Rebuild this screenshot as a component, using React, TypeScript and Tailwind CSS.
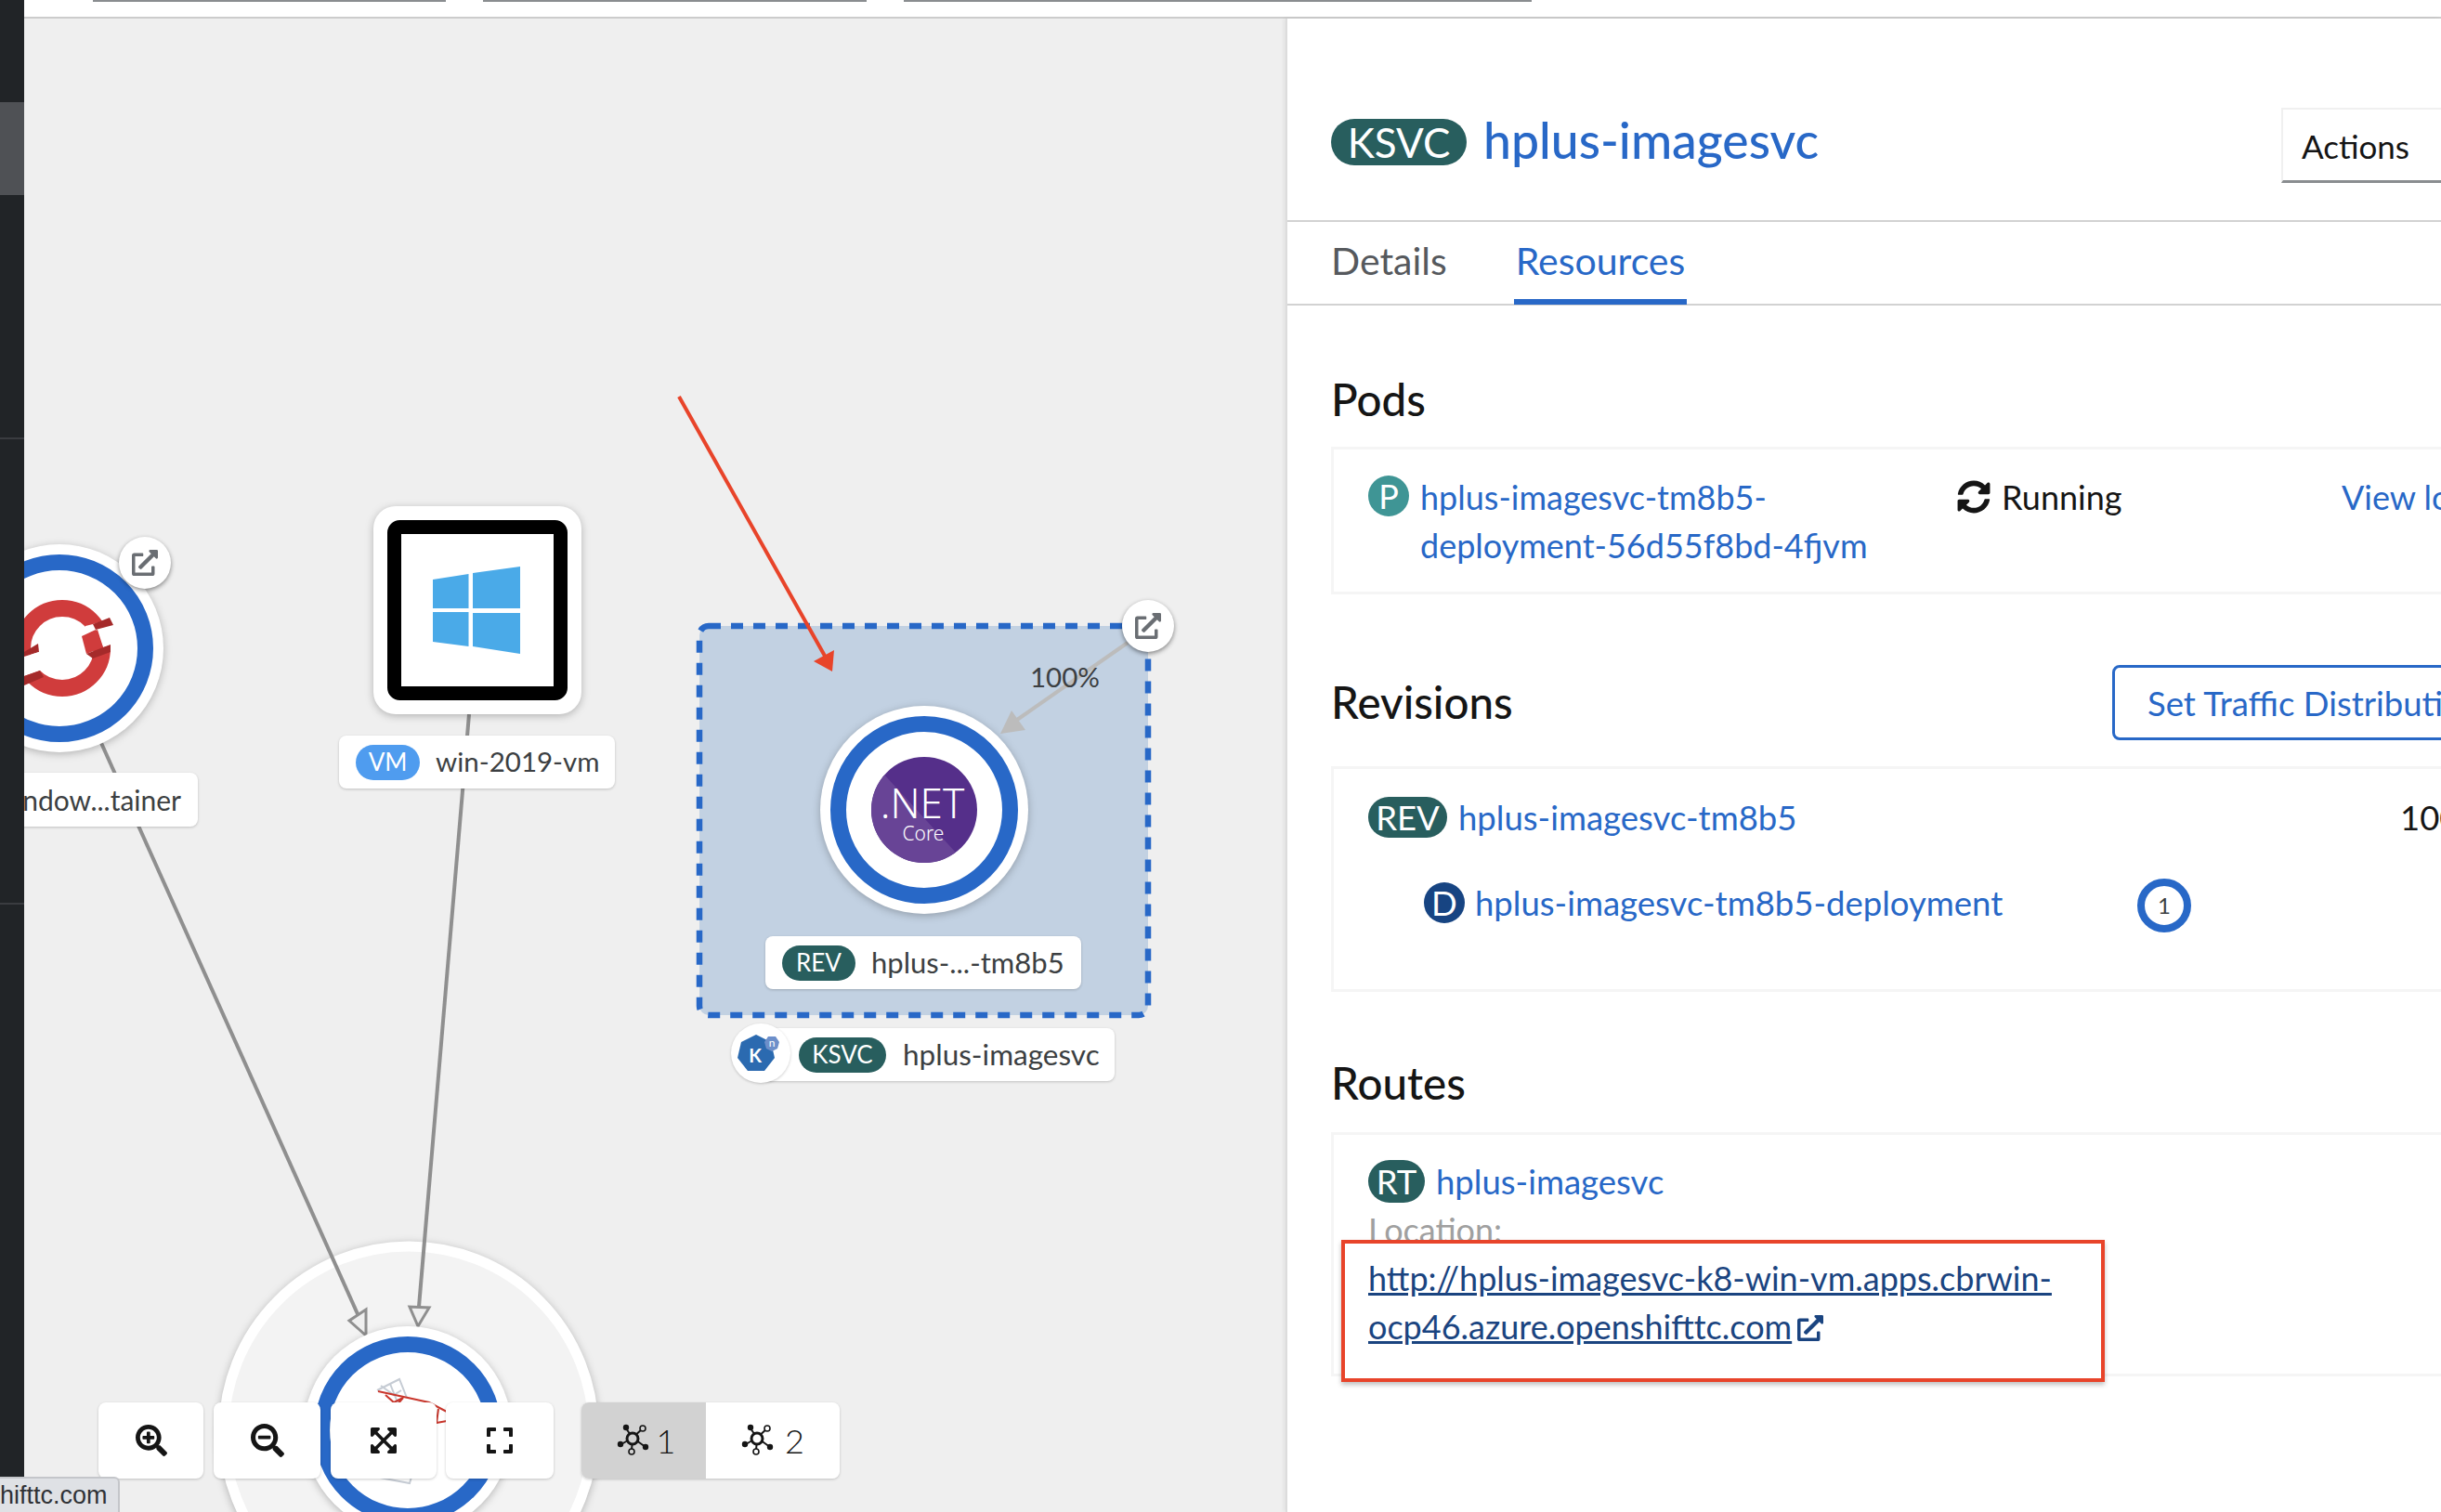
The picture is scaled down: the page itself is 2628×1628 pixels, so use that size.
import React from 'react';
import { FaExpand, FaExpandArrowsAlt, FaExternalLinkAlt, FaSearchMinus, FaSearchPlus, FaSyncAlt } from 'react-icons/fa';

const BLUE = '#2868c7';
const nodeShadow = 'drop-shadow-[0_2px_4px_rgba(0,0,0,0.25)]';

function TopologyIcon({ bg }: { bg: string }) {
  return (
    <svg width="36" height="36" viewBox="0 0 36 36" fill="none" className="text-[#151515]">
      <g stroke="currentColor" strokeWidth="2">
        <line x1="17" y1="15" x2="10" y2="5" />
        <line x1="17" y1="15" x2="5" y2="22" />
        <line x1="17" y1="15" x2="31" y2="25" />
        <line x1="17" y1="15" x2="28" y2="5" />
        <line x1="17" y1="15" x2="16" y2="29" />
      </g>
      <circle cx="17" cy="16" r="6" fill={bg} stroke="currentColor" strokeWidth="3" />
      <circle cx="10" cy="4" r="3.2" fill="currentColor" />
      <circle cx="4" cy="22" r="3.2" fill="currentColor" />
      <circle cx="31" cy="25" r="3.2" fill="currentColor" />
      <circle cx="28" cy="5" r="3" fill={bg} stroke="currentColor" strokeWidth="1.6" />
      <circle cx="16" cy="30" r="3" fill={bg} stroke="currentColor" strokeWidth="1.6" />
    </svg>
  );
}

function Bubble({ className }: { className: string }) {
  return (
    <div className={`absolute w-[56px] h-[56px] rounded-full bg-white shadow-[0_2px_5px_rgba(0,0,0,0.45)] flex items-center justify-center ${className}`}>
      <FaExternalLinkAlt size={28} color="#6a6e73" />
    </div>
  );
}

function NodeRing({ cx, cy }: { cx: number; cy: number }) {
  return (
    <g>
      <circle cx={cx} cy={cy} r="112" fill="white" className={nodeShadow} />
      <circle cx={cx} cy={cy} r="92.5" fill="white" stroke={BLUE} strokeWidth="17" />
    </g>
  );
}

function TopologyDrawing() {
  return (
    <svg className="absolute left-0 top-0" width="1359" height="1608" viewBox="26 20 1359 1608" fill="none">
      {/* bottom group + database node */}
      <circle cx="440" cy="1541" r="199" fill="#f3f3f3" stroke="white" strokeWidth="11" className={nodeShadow} />

      {/* edges */}
      <line x1="109" y1="800" x2="386" y2="1417" stroke="#8f8f8f" strokeWidth="4" />
      <line x1="505" y1="769" x2="451" y2="1407" stroke="#8f8f8f" strokeWidth="4" />
      <polygon points="394,1438 376,1422 394,1410" fill="#efefef" stroke="#8f8f8f" strokeWidth="3" />
      <polygon points="450,1428 441,1407 462,1408" fill="#efefef" stroke="#8f8f8f" strokeWidth="3" />

      <NodeRing cx={439} cy={1540} />
      <g stroke="#c6ccd4" strokeWidth="2">
        <polyline points="406,1497 430,1485 438,1505" />
        <polyline points="410,1492 424,1502 432,1497" />
        <line x1="420" y1="1490" x2="428" y2="1510" />
        <polyline points="409,1591 441,1597 443,1590" />
      </g>
      <g stroke="#c9362c" strokeWidth="2">
        <polyline points="407,1498 462,1510 481,1520" />
        <polyline points="415,1502 424,1510 434,1505 428,1512" />
        <polyline points="472,1517 470,1532 481,1530" />
      </g>

      {/* openshift node */}
      <NodeRing cx={64} cy={698} />
      <circle cx="67" cy="698" r="43" stroke="#d03c3c" strokeWidth="18" />
      <polygon points="92,674 100,672 123,665 127,694 119,695 111,697 105,678 88,685" fill="white" />
      <polygon points="100,672 118,665 122,673 103,678" fill="#a52a2a" />
      <polygon points="88,685 103,678 111,697 93,704" fill="#d03c3c" />
      <polygon points="93,704 119,694 119,702 100,709" fill="#a52a2a" />
      <polygon points="26,702 41,693 42,702 26,707" fill="#a52a2a" />
      <polygon points="26,707 42,702 43,722 26,728" fill="white" />
      <polygon points="26,728 43,722 47,729 26,738" fill="#a52a2a" />

      {/* windows vm node */}
      <rect x="402" y="545" width="224" height="224" rx="24" fill="white" className={nodeShadow} />
      <rect x="424.5" y="567.5" width="179" height="179" rx="6" fill="white" stroke="black" strokeWidth="15" />
      <g fill="#4aaae8">
        <polygon points="466,624 504.5,618 504.5,655 466,655" />
        <polygon points="509,617 560,610 560,655 509,655" />
        <polygon points="466,659 504.5,659 504.5,696 466,691" />
        <polygon points="509,660 560,660 560,704 509,696" />
      </g>

      {/* knative service group */}
      <rect x="753" y="674" width="483" height="419" rx="10" fill="#c2d1e2" stroke={BLUE} strokeWidth="6.5" strokeDasharray="13 11" />
      <line x1="1214" y1="692" x2="1095" y2="775" stroke="#bcbcbc" strokeWidth="4" />
      <polygon points="1077,790 1089,765 1104,786" fill="#bcbcbc" />
      <NodeRing cx={995} cy={872} />
      <clipPath id="dotnet">
        <circle cx="995" cy="872" r="57" />
      </clipPath>
      <g clipPath="url(#dotnet)">
        <rect x="930" y="810" width="130" height="130" fill="#552f8a" />
        <polygon points="930,810 1040,930 930,940" fill="#684496" />
      </g>
      <text x="993" y="881" textAnchor="middle" fontSize="44" fontWeight="300" fill="white" fontFamily="'Noto Sans', sans-serif">.NET</text>
      <text x="994" y="905" textAnchor="middle" fontSize="21" fontWeight="300" fill="white" fontFamily="'Noto Sans', sans-serif">Core</text>

      {/* red annotation arrow */}
      <line x1="731" y1="427" x2="889" y2="708" stroke="#e8442a" strokeWidth="4" />
      <polygon points="896,723 898,700 876,712" fill="#e8442a" />
    </svg>
  );
}

function ResourceBadge({ label, className }: { label: string; className: string }) {
  return <span className={`inline-flex items-center justify-center rounded-full text-white shrink-0 ${className}`}>{label}</span>;
}

function TopologyLabel({ badge, badgeClass, text, className }: { badge: string; badgeClass: string; text: string; className: string }) {
  return (
    <div className={`absolute h-[57px] rounded-lg bg-white shadow-[0_1px_3px_rgba(0,0,0,0.2)] flex items-center text-[#3c3f42] whitespace-nowrap ${className}`}>
      <ResourceBadge label={badge} className={`h-[38px] text-[26px] ${badgeClass}`} />
      <span>{text}</span>
    </div>
  );
}

function ToolButton({ className, children }: { className: string; children: React.ReactNode }) {
  return <button className={`h-[82px] rounded-lg bg-white shadow-[0_1px_3px_rgba(0,0,0,0.2)] flex items-center justify-center text-[#151515] ${className}`}>{children}</button>;
}

function Canvas() {
  return (
    <div className="relative flex-1 bg-[#efefef] overflow-hidden">
      <TopologyDrawing />

      <Bubble className="left-[102px] top-[558px]" />
      <Bubble className="left-[1182px] top-[626px]" />

      <div className="absolute left-[-10px] top-[812px] w-[197px] h-[58px] rounded-lg bg-white shadow-[0_1px_3px_rgba(0,0,0,0.2)] flex items-center justify-end pr-[18px] text-[30px] text-[#3c3f42] whitespace-nowrap">
        ndow...tainer
      </div>
      <TopologyLabel badge="VM" badgeClass="w-[69px] bg-[#4f9cef] mr-[17px]" text="win-2019-vm" className="left-[339px] top-[772px] w-[297px] pl-[18px] text-[29.5px]" />
      <TopologyLabel badge="REV" badgeClass="w-[79px] bg-[#285e5e] mr-[17px]" text="hplus-...-tm8b5" className="left-[798px] top-[988px] w-[340px] pl-[18px] text-[31px]" />
      <TopologyLabel badge="KSVC" badgeClass="w-[94px] bg-[#285e5e] mr-[18px]" text="hplus-imagesvc" className="left-[793px] top-[1087px] w-[381px] pl-[41px] text-[31.5px]" />

      <div className="absolute left-[761px] top-[1082px] w-[64px] h-[64px] rounded-full bg-white shadow-[0_1px_3px_rgba(0,0,0,0.2)]">
        <svg width="64" height="64" viewBox="0 0 64 64">
          <polygon points="27,12 43,20 47,37 36,51 18,51 7,37 11,20" fill="#2b6ab0" />
          <text x="26" y="42" textAnchor="middle" fontSize="20" fontWeight="700" fill="white">K</text>
          <polygon points="44,34 38,31 36,24 40,18 48,18 52,24 50,31" transform="translate(0 -4)" fill="#6d8fca" />
          <text x="44" y="25" textAnchor="middle" fontSize="12" fill="white">n</text>
        </svg>
      </div>

      <div className="absolute left-[1083px] top-[689px] text-[29.5px] leading-[40px] text-[#3c3f42]">100%</div>

      {/* zoom / layout toolbar */}
      <div className="absolute left-[80px] top-[1490px] flex">
        <ToolButton className="w-[113px] mr-[11px]"><FaSearchPlus size={34} /></ToolButton>
        <ToolButton className="w-[115px] mr-[11px]"><FaSearchMinus size={36} /></ToolButton>
        <ToolButton className="w-[114px] mr-[10px]"><FaExpandArrowsAlt size={32} /></ToolButton>
        <ToolButton className="w-[116px] mr-[30px]"><FaExpand size={32} /></ToolButton>
        <div className="flex h-[82px] w-[278px] rounded-lg overflow-hidden shadow-[0_1px_3px_rgba(0,0,0,0.2)] text-[36px] font-light text-[#151515]">
          <div className="w-[134px] pl-[5px] bg-[#d2d2d2] flex items-center justify-center gap-[7px]"><TopologyIcon bg="#d2d2d2" />1</div>
          <div className="flex-1 bg-white flex items-center justify-center gap-[11px]"><TopologyIcon bg="white" />2</div>
        </div>
      </div>
    </div>
  );
}

function Card({ className, children }: { className: string; children: React.ReactNode }) {
  return <div className={`relative border-[3px] border-r-0 border-[#f5f5f5] w-[1300px] pl-[37px] ${className}`}>{children}</div>;
}

function SidePanel() {
  return (
    <div className="w-[1244px] h-full bg-white border-l-2 border-[#dcdcdc] shadow-[-2px_0_4px_rgba(0,0,0,0.06)] overflow-hidden text-[36.5px] leading-[52px] text-[#151515] z-[1]">
      {/* header */}
      <div className="relative h-[219px] border-b-2 border-[#d2d2d2] pl-[47px] pt-[108px] flex items-start gap-[18px]">
        <ResourceBadge label="KSVC" className="w-[146px] h-[50px] bg-[#285e5e] text-[44px]" />
        <span className="-mt-[3px] text-[#2868c7] text-[53.5px] leading-[50px] font-medium">hplus-imagesvc</span>
        <button className="absolute left-[1070px] top-[96px] w-[300px] h-[81px] border-2 border-[#f0f0f0] border-b-[3px] border-b-[#8a8d90] text-left pl-[20px] pt-[2px] text-[35px]">
          Actions
        </button>
      </div>

      {/* tabs */}
      <div className="h-[90px] border-b-2 border-[#d2d2d2] pl-[47px] flex text-[41px]">
        <div className="w-[197px] pt-[16px] text-[#56595d]">Details</div>
        <div className="w-[186px] h-[89px] pt-[16px] text-center text-[#2868c7] border-b-[6px] border-[#2868c7]">Resources</div>
      </div>

      {/* body */}
      <div className="pl-[47px]">
        <h2 className="mt-[71px] mb-[21px] text-[47.5px] leading-[60px] font-medium">Pods</h2>
        <Card className="h-[159px] pt-[25px] text-[36px]">
          <div className="flex items-start">
            <ResourceBadge label="P" className="w-[44px] h-[44px] bg-[#3f9595] mt-[3px] mr-[12px]" />
            <div className="w-[578px] text-[#2868c7]">
              hplus-imagesvc-tm8b5-<br />deployment-56d55f8bd-4fjvm
            </div>
            <div className="w-[414px] flex items-center gap-[12px]"><FaSyncAlt size={36} />Running</div>
            <div className="text-[#2868c7] whitespace-nowrap">View logs</div>
          </div>
        </Card>

        <div className="mt-[76px] mb-[28px] h-[81px] flex items-center relative">
          <h2 className="-mt-[2px] text-[47.5px] leading-[60px] font-medium">Revisions</h2>
          <button className="absolute left-[841px] top-0 w-[500px] h-[81px] border-[3px] border-[#2868c7] rounded-lg text-left pl-[35px] text-[#2868c7] whitespace-nowrap">
            Set Traffic Distribution
          </button>
        </div>
        <Card className="h-[243px] pt-[29px]">
          <div className="flex items-center h-[46px]">
            <ResourceBadge label="REV" className="w-[85px] h-[44px] bg-[#285e5e] mr-[12px]" />
            <span className="w-[1014px] text-[#2868c7]">hplus-imagesvc-tm8b5</span>
            <span>100%</span>
          </div>
          <div className="flex items-center h-[58px] mt-[40px] pl-[60px]">
            <ResourceBadge label="D" className="w-[44px] h-[44px] bg-[#174482] mr-[11px]" />
            <span className="w-[713px] text-[#2868c7]">hplus-imagesvc-tm8b5-deployment</span>
            <span className="mt-[6px] w-[58px] h-[58px] rounded-full border-[8px] border-[#2868c7] flex items-center justify-center text-[24px] text-[#3c3f42]">1</span>
          </div>
        </Card>

        <h2 className="mt-[68px] mb-[23px] text-[47.5px] leading-[60px] font-medium">Routes</h2>
        <Card className="h-[263px] pt-[27px]">
          <div className="flex items-center h-[46px]">
            <ResourceBadge label="RT" className="w-[61px] h-[46px] bg-[#285e5e] mr-[12px]" />
            <span className="text-[#2868c7]">hplus-imagesvc</span>
          </div>
          <div className="mt-[3px] text-[36px] text-[#a0a0a0]">Location:</div>
          {/* annotation box drawn on the screenshot */}
          <div className="absolute left-[8px] top-[113px] w-[822px] h-[153px] bg-white border-4 border-[#e8442a] shadow-[0_3px_5px_rgba(0,0,0,0.25)]" />
          <div className="relative w-[800px] text-[36px] text-[#1a4480] underline">
            http://hplus-imagesvc-k8-win-vm.apps.cbrwin-<br />ocp46.azure.openshifttc.com
            <FaExternalLinkAlt size={28} className="inline ml-[6px] mb-[6px]" />
          </div>
        </Card>
      </div>
    </div>
  );
}

export default function App() {
  return (
    <div className="relative flex w-[2628px] h-[1628px] overflow-hidden bg-white font-['Lato',sans-serif]">
      {/* left nav rail */}
      <div className="w-[26px] h-full bg-[#212427] shrink-0 z-10">
        <div className="h-[110px]" />
        <div className="h-[100px] bg-[#4f5155]" />
        <div className="h-[263px] border-b-2 border-[#3a3c40]" />
        <div className="h-[501px] border-b-2 border-[#3a3c40]" />
      </div>

      <div className="flex-1 flex flex-col min-w-0">
        {/* context tabs cut off by the crop */}
        <div className="h-[20px] shrink-0 bg-white border-b-2 border-[#cccccc] flex items-start gap-[40px] pl-[74px]">
          <div className="w-[380px] h-[2px] bg-[#8a8d90]" />
          <div className="w-[413px] h-[2px] bg-[#8a8d90]" />
          <div className="w-[676px] h-[2px] bg-[#8a8d90]" />
        </div>
        <div className="flex-1 flex min-h-0">
          <Canvas />
          <SidePanel />
        </div>
      </div>

      {/* browser status bubble */}
      <div className="absolute left-0 bottom-0 w-[129px] h-[38px] z-20 bg-[#dfe1e5] border-t-2 border-r-2 border-[#c4c6ca] rounded-tr-md font-['Liberation_Sans',sans-serif] text-[27px] leading-[36px] text-[#303236] overflow-hidden whitespace-nowrap">
        hifttc.com
      </div>
    </div>
  );
}
